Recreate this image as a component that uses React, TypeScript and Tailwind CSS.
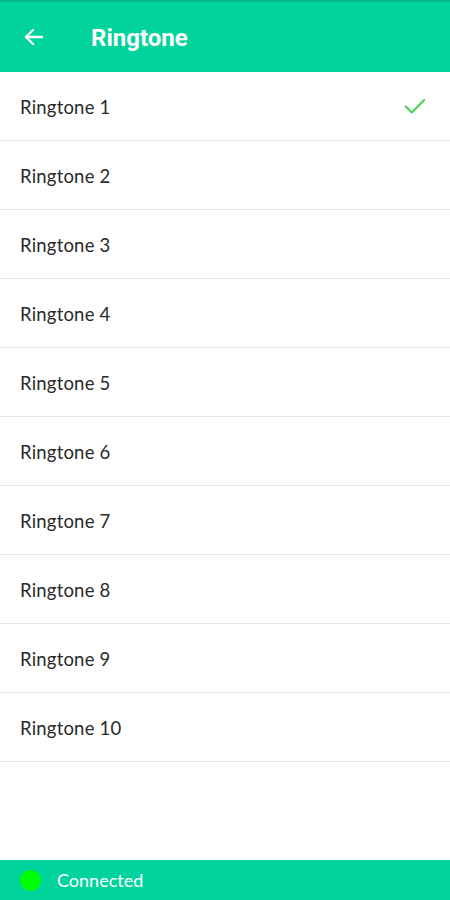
import React from "react";

const items = Array.from({ length: 10 }, (_, i) => `Ringtone ${i + 1}`);

export default function App() {
  return (
    <div className="w-[450px] h-[900px] flex flex-col bg-white" style={{ fontFamily: "Lato, 'Noto Sans', sans-serif" }}>
      <div className="h-[72px] bg-[#00d39c] flex items-center border-t-2 border-[#00b886] shrink-0">
        <div className="w-[91px] pl-[22px] flex items-center">
          <svg width="24" height="24" viewBox="0 0 24 24" fill="none" stroke="white" strokeWidth="2.4" strokeLinecap="round" strokeLinejoin="round">
            <path d="M20 12H4" />
            <path d="M11 5l-7 7 7 7" />
          </svg>
        </div>
        <span className="text-white text-[24px] font-bold pt-[2px]" style={{ fontFamily: "Roboto, sans-serif" }}>Ringtone</span>
      </div>
      <div className="flex-1 flex flex-col">
        {items.map((t, i) => (
          <div key={t} className="h-[69px] flex items-center justify-between pl-[20px] pr-[22px] border-b border-[#e6e6e6]">
            <span className="text-[18.5px] text-[#2a2a2a] tracking-[0.2px] pt-[3px]">{t}</span>
            {i === 0 && (
              <svg width="26" height="26" viewBox="0 0 24 24" fill="none" stroke="#4cd35a" strokeWidth="2" strokeLinecap="round" strokeLinejoin="round">
                <path d="M3.5 12.5l5.5 5.5L20.5 6.5" />
              </svg>
            )}
          </div>
        ))}
      </div>
      <div className="h-[40px] bg-[#00d39c] flex items-center pl-[20px] shrink-0">
        <div className="w-[21px] h-[21px] rounded-full bg-[#00ff00]" />
        <span className="ml-[16px] text-white text-[18px]">Connected</span>
      </div>
    </div>
  );
}
